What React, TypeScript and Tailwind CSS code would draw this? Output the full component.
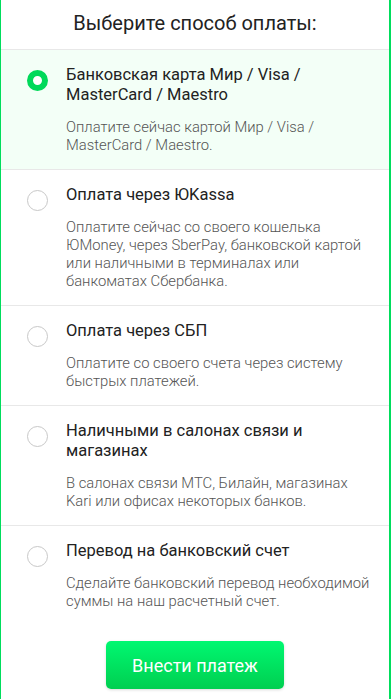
import React, { useState } from 'react';

interface Method {
  id: string;
  title: string;
  desc: string;
}

const methods: Method[] = [
  {
    id: 'card',
    title: 'Банковская карта Мир / Visa / MasterCard / Maestro',
    desc: 'Оплатите сейчас картой Мир / Visa / MasterCard / Maestro.',
  },
  {
    id: 'yookassa',
    title: 'Оплата через ЮKassa',
    desc: 'Оплатите сейчас со своего кошелька ЮMoney, через SberPay, банковской картой или наличными в терминалах или банкоматах Сбербанка.',
  },
  {
    id: 'sbp',
    title: 'Оплата через СБП',
    desc: 'Оплатите со своего счета через систему быстрых платежей.',
  },
  {
    id: 'cash',
    title: 'Наличными в салонах связи и магазинах',
    desc: 'В салонах связи МТС, Билайн, магазинах Kari или офисах некоторых банков.',
  },
  {
    id: 'transfer',
    title: 'Перевод на банковский счет',
    desc: 'Сделайте банковский перевод необходимой суммы на наш расчетный счет.',
  },
];

const App = () => {
  const [selected, setSelected] = useState('card');

  return (
    <div
      className="min-h-screen bg-white border-l border-r-2 border-[#00dd5c] text-[#222]"
      style={{ fontFamily: 'Roboto, "Noto Sans", sans-serif' }}
    >
      {/* Header */}
      <div className="h-[50px] flex items-center justify-center border-b border-[#e8e8e8]">
        <div className="text-[20px] leading-6 text-[#222] -mt-[4px]">Выберите способ оплаты:</div>
      </div>

      {/* Options */}
      <div>
        {methods.map((m, i) => {
          const active = selected === m.id;
          return (
            <div
              key={m.id}
              onClick={() => setSelected(m.id)}
              className={`flex gap-[18px] pl-[26px] pr-[18px] py-[15px] cursor-pointer ${i < methods.length - 1 ? 'border-b border-[#e8e8e8]' : ''} ${active ? 'bg-[#f3fff7]' : 'bg-white'}`}
            >
              <div className="pt-[5px] shrink-0">
                {active ? (
                  <div className="w-[21px] h-[21px] rounded-full border-[6px] border-[#00d95a] bg-white" />
                ) : (
                  <div className="w-[21px] h-[21px] rounded-full border border-[#c8c8c8] bg-white" />
                )}
              </div>
              <div className="flex-1">
                <div className="text-[16.5px] leading-5 text-[#222]">{m.title}</div>
                <div className="mt-[13px] text-[14.8px] leading-[18px] font-light text-[#555]">{m.desc}</div>
              </div>
            </div>
          );
        })}
      </div>

      {/* Submit */}
      <div className="flex justify-center pt-[16px] pb-[12px]">
        <button className="w-[178px] h-[48px] rounded-[5px] bg-gradient-to-b from-[#00f871] to-[#00cf50] text-white text-[18px] shadow-[0_1px_3px_rgba(0,0,0,0.15)]">
          Внести платеж
        </button>
      </div>
    </div>
  );
};

export default App;
